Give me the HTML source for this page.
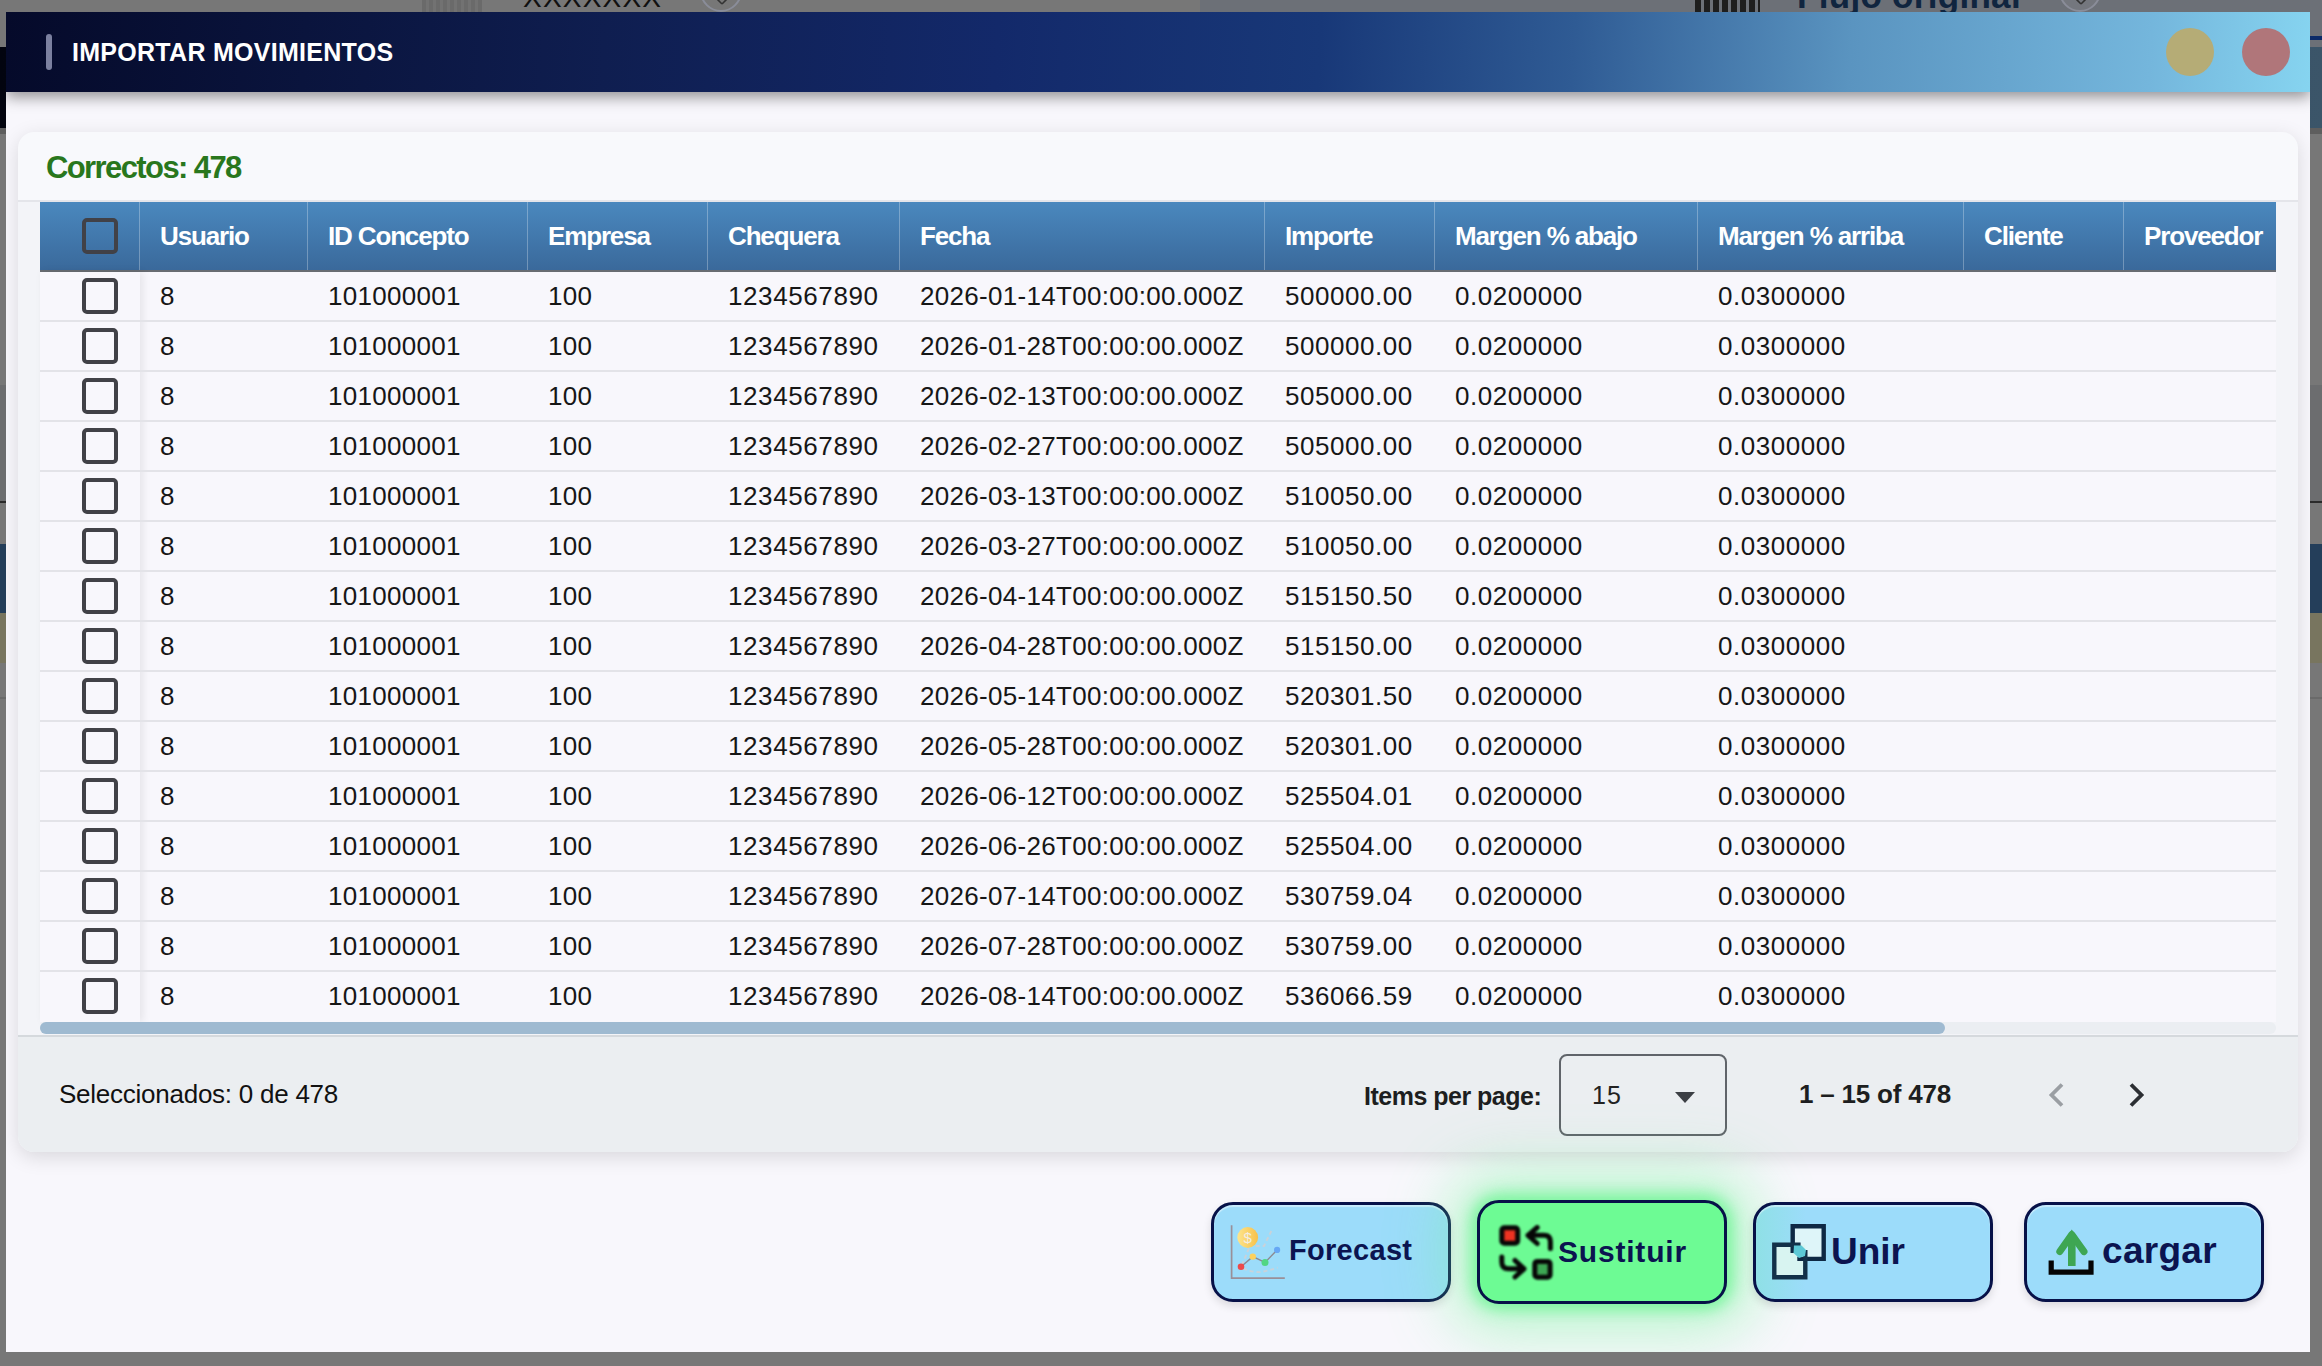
<!DOCTYPE html>
<html><head><meta charset="utf-8">
<style>
*{box-sizing:border-box;margin:0;padding:0}
html,body{width:2322px;height:1366px;overflow:hidden}
body{background:#777777;position:relative;font-family:"Liberation Sans",sans-serif}
#dlg{position:absolute;left:6px;top:12px;width:2304px;height:1340px;background:#f8f7fc;overflow:hidden}
#hdr{position:absolute;left:0;top:0;width:2304px;height:80px;
 background:linear-gradient(93deg,#050a2a 0%,#0f1e50 26%,#13296a 43%,#183878 57%,#2f5b94 68%,#5a94c0 80%,#74b6dc 93%,#86d4f0 100%);
 box-shadow:0 5px 14px rgba(0,0,0,.42);z-index:2}
#bar{position:absolute;left:40px;top:22px;width:6px;height:36px;border-radius:3px;background:#7b809f}
#title{position:absolute;left:66px;top:25px;color:#fff;font-weight:bold;font-size:25px;letter-spacing:0.28px;line-height:30px;white-space:nowrap}
.dot{position:absolute;top:16px;width:48px;height:48px;border-radius:50%}
#card{position:absolute;left:12px;top:120px;width:2280px;height:1020px;background:#f8f9fc;border-radius:16px;
 box-shadow:0 5px 20px rgba(0,0,0,.13);overflow:hidden}
#corr{position:absolute;left:28px;top:18px;color:#29771d;font-weight:bold;font-size:31px;letter-spacing:-1.6px;line-height:36px;white-space:nowrap}
#tarea{position:absolute;left:0;top:68px;width:2280px;height:835px;background:#f3f4f8;border-top:2px solid #e4e5ea}
#tbl{position:absolute;left:22px;top:0px;width:2236px;height:820px;background:#f8f7fc}
.th{position:absolute;left:0;top:0;width:2236px;height:70px;background:linear-gradient(#4a88be,#3a699b);border-bottom:2px solid #686c72}
.hc{position:absolute;top:0;height:68px;color:#fff;font-weight:bold;font-size:26px;letter-spacing:-1.15px;line-height:68px;padding-left:20px;white-space:nowrap}
.hc.sep{border-left:1px solid rgba(255,255,255,.28)}
.row{position:absolute;left:0;width:2236px;height:50px;border-bottom:2px solid #e3e3e8}
.c{position:absolute;top:0;height:48px;line-height:48px;font-size:26px;color:#161616;padding-left:21px;letter-spacing:0.3px;white-space:nowrap}
.c0{padding-left:0}
.cb{position:absolute;left:42px;top:6px;width:36px;height:36px;border:4px solid #414147;border-radius:5px}
.hcb{top:16px}
#sticky{position:absolute;left:0;top:70px;width:100px;height:750px;box-shadow:3px 0 8px rgba(0,0,0,.08);background:#f8f7fc}
#track{position:absolute;left:22px;top:820px;width:2236px;height:12px;border-radius:6px;background:#ebeef2}
#thumb{position:absolute;left:22px;top:820px;width:1905px;height:12px;border-radius:6px;background:#9fbad1}
#pag{position:absolute;left:0;top:903px;width:2280px;height:117px;background:#ebeef1;border-top:2px solid #d5d9dd}
#sel{position:absolute;left:41px;top:42px;font-size:26px;color:#111;line-height:30px;letter-spacing:-0.25px;white-space:nowrap}
#ipp{position:absolute;left:1346px;top:44px;font-size:25px;font-weight:bold;color:#1d1e20;line-height:30px;letter-spacing:-0.5px;white-space:nowrap}
#selbox{position:absolute;left:1541px;top:17px;width:168px;height:82px;border:2px solid #60646a;border-radius:8px}
#selv{position:absolute;left:31px;top:24px;font-size:25px;color:#222;line-height:30px;letter-spacing:1px}
#caret{position:absolute;left:114px;top:36px;width:0;height:0;border-left:10px solid transparent;border-right:10px solid transparent;border-top:11px solid #3c3f45}
#range{position:absolute;left:1781px;top:42px;font-size:26px;font-weight:bold;color:#1d1e20;line-height:30px;letter-spacing:-0.2px;white-space:nowrap}
#prev{position:absolute;left:2028px;top:45px}
#next{position:absolute;left:2109px;top:45px}
.btn{position:absolute;top:1190px;height:100px;border:3.5px solid #071148;border-radius:22px;background:#9cdcfa;box-shadow:inset 0 2px 1px rgba(255,255,255,.45),0 4px 8px rgba(0,0,0,.12)}
.btxt{position:absolute;color:#0b1450;font-weight:bold;font-size:29px;line-height:36px;white-space:nowrap}
.ico{position:absolute}
.bgb{position:absolute;white-space:nowrap}
.row.last{border-bottom:none}

</style></head><body>
<div class="bgb" style="left:1200px;top:0;width:1122px;height:47px;background:#6c7077"></div>
<div class="bgb" style="left:0;top:47px;width:2322px;height:81px;background:linear-gradient(90deg,#02040f,#3b5569)"></div>
<div class="bgb" style="left:2300px;top:36px;width:22px;height:4px;background:#0b2a68"></div>
<div class="bgb" style="left:0;top:128px;width:2322px;height:6px;background:#5e5e5e"></div>
<div class="bgb" style="left:0;top:385px;width:2322px;height:117px;background:#6c6d6f"></div>
<div class="bgb" style="left:0;top:501px;width:2322px;height:2px;background:#2a2a2a"></div>
<div class="bgb" style="left:0;top:544px;width:2322px;height:69px;background:#243e5a"></div>
<div class="bgb" style="left:0;top:613px;width:2322px;height:50px;background:#78755f"></div>
<div class="bgb" style="left:0;top:697px;width:2322px;height:2px;background:#6a6a6a"></div>
<div class="bgb" style="left:422px;top:0;width:60px;height:12px;background:repeating-linear-gradient(90deg,#6a6a6a 0 4px,#727272 4px 7px)"></div>
<div class="bgb" style="left:1695px;top:0;width:65px;height:12px;background:repeating-linear-gradient(90deg,#1e1e1e 0 6px,#6c7077 6px 9px)"></div>
<div class="bgb" style="left:523px;top:-17px;font-size:28px;color:#111;letter-spacing:1.2px;line-height:30px">XXXXXXX</div>
<div class="bgb" style="left:1797px;top:-21px;font-size:35px;font-weight:bold;color:#10253f;line-height:34px;letter-spacing:0.3px">Flujo original</div>
<div class="bgb" style="left:700px;top:-30px;width:42px;height:42px;border-radius:50%;border:2px solid #8a8d99"></div><svg class="bgb" style="left:712px;top:0" width="18" height="8"><path d="M2 -4 L10 4 M18 -4 L10 4" stroke="#333" stroke-width="1.6"/></svg>
<div class="bgb" style="left:2059px;top:-30px;width:42px;height:42px;border-radius:50%;border:2px solid #8a8d99;background:#74777e"></div><svg class="bgb" style="left:2071px;top:0" width="18" height="8"><path d="M2 -4 L10 4 M18 -4 L10 4" stroke="#333" stroke-width="1.6"/></svg>
<div id="dlg">
 <div id="hdr">
  <div id="bar"></div>
  <div id="title">IMPORTAR MOVIMIENTOS</div>
  <div class="dot" style="left:2160px;background:#b5ac76"></div>
  <div class="dot" style="left:2236px;background:#b0767a"></div>
 </div>
 <div id="card">
  <div id="corr">Correctos: 478</div>
  <div id="tarea">
   <div id="tbl">
    <div class="th"><div class="hc" style="left:0px;width:99px"><span class="cb hcb"></span></div><div class="hc sep" style="left:99px;width:168px">Usuario</div><div class="hc sep" style="left:267px;width:220px">ID Concepto</div><div class="hc sep" style="left:487px;width:180px">Empresa</div><div class="hc sep" style="left:667px;width:192px">Chequera</div><div class="hc sep" style="left:859px;width:365px">Fecha</div><div class="hc sep" style="left:1224px;width:170px">Importe</div><div class="hc sep" style="left:1394px;width:263px">Margen % abajo</div><div class="hc sep" style="left:1657px;width:266px">Margen % arriba</div><div class="hc sep" style="left:1923px;width:160px">Cliente</div><div class="hc sep" style="left:2083px;width:153px">Proveedor</div></div>
    <div id="sticky"></div>
    <div class="row" style="top:70px"><div class="c c0" style="left:0px;width:99px"><span class="cb"></span></div><div class="c" style="left:99px;width:168px">8</div><div class="c" style="left:267px;width:220px">101000001</div><div class="c" style="left:487px;width:180px">100</div><div class="c" style="left:667px;width:192px;letter-spacing:0.6px">1234567890</div><div class="c" style="left:859px;width:365px">2026-01-14T00:00:00.000Z</div><div class="c" style="left:1224px;width:170px;letter-spacing:0.55px">500000.00</div><div class="c" style="left:1394px;width:263px;letter-spacing:0.55px">0.0200000</div><div class="c" style="left:1657px;width:266px;letter-spacing:0.55px">0.0300000</div></div>
<div class="row" style="top:120px"><div class="c c0" style="left:0px;width:99px"><span class="cb"></span></div><div class="c" style="left:99px;width:168px">8</div><div class="c" style="left:267px;width:220px">101000001</div><div class="c" style="left:487px;width:180px">100</div><div class="c" style="left:667px;width:192px;letter-spacing:0.6px">1234567890</div><div class="c" style="left:859px;width:365px">2026-01-28T00:00:00.000Z</div><div class="c" style="left:1224px;width:170px;letter-spacing:0.55px">500000.00</div><div class="c" style="left:1394px;width:263px;letter-spacing:0.55px">0.0200000</div><div class="c" style="left:1657px;width:266px;letter-spacing:0.55px">0.0300000</div></div>
<div class="row" style="top:170px"><div class="c c0" style="left:0px;width:99px"><span class="cb"></span></div><div class="c" style="left:99px;width:168px">8</div><div class="c" style="left:267px;width:220px">101000001</div><div class="c" style="left:487px;width:180px">100</div><div class="c" style="left:667px;width:192px;letter-spacing:0.6px">1234567890</div><div class="c" style="left:859px;width:365px">2026-02-13T00:00:00.000Z</div><div class="c" style="left:1224px;width:170px;letter-spacing:0.55px">505000.00</div><div class="c" style="left:1394px;width:263px;letter-spacing:0.55px">0.0200000</div><div class="c" style="left:1657px;width:266px;letter-spacing:0.55px">0.0300000</div></div>
<div class="row" style="top:220px"><div class="c c0" style="left:0px;width:99px"><span class="cb"></span></div><div class="c" style="left:99px;width:168px">8</div><div class="c" style="left:267px;width:220px">101000001</div><div class="c" style="left:487px;width:180px">100</div><div class="c" style="left:667px;width:192px;letter-spacing:0.6px">1234567890</div><div class="c" style="left:859px;width:365px">2026-02-27T00:00:00.000Z</div><div class="c" style="left:1224px;width:170px;letter-spacing:0.55px">505000.00</div><div class="c" style="left:1394px;width:263px;letter-spacing:0.55px">0.0200000</div><div class="c" style="left:1657px;width:266px;letter-spacing:0.55px">0.0300000</div></div>
<div class="row" style="top:270px"><div class="c c0" style="left:0px;width:99px"><span class="cb"></span></div><div class="c" style="left:99px;width:168px">8</div><div class="c" style="left:267px;width:220px">101000001</div><div class="c" style="left:487px;width:180px">100</div><div class="c" style="left:667px;width:192px;letter-spacing:0.6px">1234567890</div><div class="c" style="left:859px;width:365px">2026-03-13T00:00:00.000Z</div><div class="c" style="left:1224px;width:170px;letter-spacing:0.55px">510050.00</div><div class="c" style="left:1394px;width:263px;letter-spacing:0.55px">0.0200000</div><div class="c" style="left:1657px;width:266px;letter-spacing:0.55px">0.0300000</div></div>
<div class="row" style="top:320px"><div class="c c0" style="left:0px;width:99px"><span class="cb"></span></div><div class="c" style="left:99px;width:168px">8</div><div class="c" style="left:267px;width:220px">101000001</div><div class="c" style="left:487px;width:180px">100</div><div class="c" style="left:667px;width:192px;letter-spacing:0.6px">1234567890</div><div class="c" style="left:859px;width:365px">2026-03-27T00:00:00.000Z</div><div class="c" style="left:1224px;width:170px;letter-spacing:0.55px">510050.00</div><div class="c" style="left:1394px;width:263px;letter-spacing:0.55px">0.0200000</div><div class="c" style="left:1657px;width:266px;letter-spacing:0.55px">0.0300000</div></div>
<div class="row" style="top:370px"><div class="c c0" style="left:0px;width:99px"><span class="cb"></span></div><div class="c" style="left:99px;width:168px">8</div><div class="c" style="left:267px;width:220px">101000001</div><div class="c" style="left:487px;width:180px">100</div><div class="c" style="left:667px;width:192px;letter-spacing:0.6px">1234567890</div><div class="c" style="left:859px;width:365px">2026-04-14T00:00:00.000Z</div><div class="c" style="left:1224px;width:170px;letter-spacing:0.55px">515150.50</div><div class="c" style="left:1394px;width:263px;letter-spacing:0.55px">0.0200000</div><div class="c" style="left:1657px;width:266px;letter-spacing:0.55px">0.0300000</div></div>
<div class="row" style="top:420px"><div class="c c0" style="left:0px;width:99px"><span class="cb"></span></div><div class="c" style="left:99px;width:168px">8</div><div class="c" style="left:267px;width:220px">101000001</div><div class="c" style="left:487px;width:180px">100</div><div class="c" style="left:667px;width:192px;letter-spacing:0.6px">1234567890</div><div class="c" style="left:859px;width:365px">2026-04-28T00:00:00.000Z</div><div class="c" style="left:1224px;width:170px;letter-spacing:0.55px">515150.00</div><div class="c" style="left:1394px;width:263px;letter-spacing:0.55px">0.0200000</div><div class="c" style="left:1657px;width:266px;letter-spacing:0.55px">0.0300000</div></div>
<div class="row" style="top:470px"><div class="c c0" style="left:0px;width:99px"><span class="cb"></span></div><div class="c" style="left:99px;width:168px">8</div><div class="c" style="left:267px;width:220px">101000001</div><div class="c" style="left:487px;width:180px">100</div><div class="c" style="left:667px;width:192px;letter-spacing:0.6px">1234567890</div><div class="c" style="left:859px;width:365px">2026-05-14T00:00:00.000Z</div><div class="c" style="left:1224px;width:170px;letter-spacing:0.55px">520301.50</div><div class="c" style="left:1394px;width:263px;letter-spacing:0.55px">0.0200000</div><div class="c" style="left:1657px;width:266px;letter-spacing:0.55px">0.0300000</div></div>
<div class="row" style="top:520px"><div class="c c0" style="left:0px;width:99px"><span class="cb"></span></div><div class="c" style="left:99px;width:168px">8</div><div class="c" style="left:267px;width:220px">101000001</div><div class="c" style="left:487px;width:180px">100</div><div class="c" style="left:667px;width:192px;letter-spacing:0.6px">1234567890</div><div class="c" style="left:859px;width:365px">2026-05-28T00:00:00.000Z</div><div class="c" style="left:1224px;width:170px;letter-spacing:0.55px">520301.00</div><div class="c" style="left:1394px;width:263px;letter-spacing:0.55px">0.0200000</div><div class="c" style="left:1657px;width:266px;letter-spacing:0.55px">0.0300000</div></div>
<div class="row" style="top:570px"><div class="c c0" style="left:0px;width:99px"><span class="cb"></span></div><div class="c" style="left:99px;width:168px">8</div><div class="c" style="left:267px;width:220px">101000001</div><div class="c" style="left:487px;width:180px">100</div><div class="c" style="left:667px;width:192px;letter-spacing:0.6px">1234567890</div><div class="c" style="left:859px;width:365px">2026-06-12T00:00:00.000Z</div><div class="c" style="left:1224px;width:170px;letter-spacing:0.55px">525504.01</div><div class="c" style="left:1394px;width:263px;letter-spacing:0.55px">0.0200000</div><div class="c" style="left:1657px;width:266px;letter-spacing:0.55px">0.0300000</div></div>
<div class="row" style="top:620px"><div class="c c0" style="left:0px;width:99px"><span class="cb"></span></div><div class="c" style="left:99px;width:168px">8</div><div class="c" style="left:267px;width:220px">101000001</div><div class="c" style="left:487px;width:180px">100</div><div class="c" style="left:667px;width:192px;letter-spacing:0.6px">1234567890</div><div class="c" style="left:859px;width:365px">2026-06-26T00:00:00.000Z</div><div class="c" style="left:1224px;width:170px;letter-spacing:0.55px">525504.00</div><div class="c" style="left:1394px;width:263px;letter-spacing:0.55px">0.0200000</div><div class="c" style="left:1657px;width:266px;letter-spacing:0.55px">0.0300000</div></div>
<div class="row" style="top:670px"><div class="c c0" style="left:0px;width:99px"><span class="cb"></span></div><div class="c" style="left:99px;width:168px">8</div><div class="c" style="left:267px;width:220px">101000001</div><div class="c" style="left:487px;width:180px">100</div><div class="c" style="left:667px;width:192px;letter-spacing:0.6px">1234567890</div><div class="c" style="left:859px;width:365px">2026-07-14T00:00:00.000Z</div><div class="c" style="left:1224px;width:170px;letter-spacing:0.55px">530759.04</div><div class="c" style="left:1394px;width:263px;letter-spacing:0.55px">0.0200000</div><div class="c" style="left:1657px;width:266px;letter-spacing:0.55px">0.0300000</div></div>
<div class="row" style="top:720px"><div class="c c0" style="left:0px;width:99px"><span class="cb"></span></div><div class="c" style="left:99px;width:168px">8</div><div class="c" style="left:267px;width:220px">101000001</div><div class="c" style="left:487px;width:180px">100</div><div class="c" style="left:667px;width:192px;letter-spacing:0.6px">1234567890</div><div class="c" style="left:859px;width:365px">2026-07-28T00:00:00.000Z</div><div class="c" style="left:1224px;width:170px;letter-spacing:0.55px">530759.00</div><div class="c" style="left:1394px;width:263px;letter-spacing:0.55px">0.0200000</div><div class="c" style="left:1657px;width:266px;letter-spacing:0.55px">0.0300000</div></div>
<div class="row last" style="top:770px"><div class="c c0" style="left:0px;width:99px"><span class="cb"></span></div><div class="c" style="left:99px;width:168px">8</div><div class="c" style="left:267px;width:220px">101000001</div><div class="c" style="left:487px;width:180px">100</div><div class="c" style="left:667px;width:192px;letter-spacing:0.6px">1234567890</div><div class="c" style="left:859px;width:365px">2026-08-14T00:00:00.000Z</div><div class="c" style="left:1224px;width:170px;letter-spacing:0.55px">536066.59</div><div class="c" style="left:1394px;width:263px;letter-spacing:0.55px">0.0200000</div><div class="c" style="left:1657px;width:266px;letter-spacing:0.55px">0.0300000</div></div>

   </div>
   <div id="track"></div><div id="thumb"></div>
  </div>
  <div id="pag">
   <div id="sel">Seleccionados: 0 de 478</div>
   <div id="ipp">Items per page:</div>
   <div id="selbox"><div id="selv">15</div><div id="caret"></div></div>
   <div id="range">1 – 15 of 478</div>
   <svg id="prev" width="20" height="26" viewBox="0 0 20 26"><path d="M16 2.5 L5.5 13 L16 23.5" fill="none" stroke="#9a9ea3" stroke-width="3.8"/></svg>
   <svg id="next" width="20" height="26" viewBox="0 0 20 26"><path d="M4 2.5 L14.5 13 L4 23.5" fill="none" stroke="#2b2e33" stroke-width="3.8"/></svg>
  </div>
 </div>
 <div class="btn" style="left:1205px;width:240px;top:1190px;height:100px"></div>
 <div class="btn" style="left:1471px;width:250px;top:1188px;height:104px;background:#6dfb94;box-shadow:0 0 16px 6px rgba(100,245,140,.8),0 0 60px 30px rgba(110,245,150,.42)"></div>
 <div class="btn" style="left:1747px;width:240px;top:1190px;height:100px;background:linear-gradient(90deg,#8fe0e6 0px,#9cdcfa 50px)"></div>
 <div class="btn" style="left:2018px;width:240px;top:1190px;height:100px"></div>
 <!-- Forecast icon: origin page (1226,1220) -> dlg (1220,1208) -->
 <svg class="ico" style="left:1220px;top:1208px" width="64" height="64" viewBox="0 0 64 64">
  <defs>
   <linearGradient id="gcoin" x1="0" y1="0" x2="1" y2="0"><stop offset="0" stop-color="#fde58c"/><stop offset="1" stop-color="#f7c04a"/></linearGradient>
  </defs>
  <path d="M16 45 L23 28" fill="none" stroke="#c9d2da" stroke-width="1.9" stroke-dasharray="4 3"/>
  <path d="M29.7 26 L38 26 L45.6 10.4" fill="none" stroke="#c9d2da" stroke-width="1.9" stroke-dasharray="4 3"/>
  <path d="M17 48.5 Q25 52 33.3 52.1 Q42 51 51.7 47.7" fill="none" stroke="#c9d2da" stroke-width="1.9" stroke-dasharray="4 3"/>
  <path d="M5.6 5.2 V58.2 H58.8" fill="none" stroke="#9a8f98" stroke-width="1.7"/>
  <path d="M15 46.8 L26.8 36.6 L39 42.5 L51.1 29.9" fill="none" stroke="#8c8a92" stroke-width="1.4"/>
  <circle cx="21.7" cy="17.5" r="10.4" fill="url(#gcoin)"/>
  <text x="21.7" y="23" text-anchor="middle" font-family="Liberation Sans" font-size="15" fill="#f1ede4">$</text>
  <circle cx="15" cy="46.8" r="3.3" fill="#ec4a4a"/>
  <circle cx="26.8" cy="36.6" r="3.2" fill="#fcd15e"/>
  <circle cx="39" cy="42.5" r="3.5" fill="#52d684"/>
  <circle cx="51.1" cy="29.9" r="3.1" fill="#66a8f5"/>
 </svg>
 <!-- Sustituir icon: origin page (1496,1220) -> dlg (1490,1208) -->
 <svg class="ico" style="left:1490px;top:1208px;filter:blur(0.8px)" width="64" height="64" viewBox="0 0 64 64">
  <rect x="5.8" y="7.7" width="15.9" height="15.6" rx="2.5" fill="#ee3322" stroke="#060606" stroke-width="5"/>
  <rect x="38.8" y="41.4" width="15.3" height="15.9" rx="2.5" fill="#3da653" stroke="#060606" stroke-width="5"/>
  <path d="M41.2 7.5 L32 15.3 L41.2 23.5 M32 15.3 H48 Q54.4 15.3 54.4 22 V28.5" fill="none" stroke="#060606" stroke-width="5" stroke-linecap="round" stroke-linejoin="round"/>
  <path d="M5.8 37 V42 Q5.8 48.8 12.7 48.8 H28 M19 40.5 L28 48.8 L19 57" fill="none" stroke="#060606" stroke-width="5" stroke-linecap="round" stroke-linejoin="round"/>
 </svg>
 <!-- Unir icon: origin page (1766,1220) -> dlg (1760,1208) -->
 <svg class="ico" style="left:1760px;top:1208px;filter:blur(0.4px)" width="64" height="64" viewBox="0 0 64 64">
  <rect x="26.7" y="6.2" width="31" height="32.7" fill="#def5f9"/>
  <rect x="8.3" y="24.7" width="31" height="32.6" fill="#d8f4f1"/>
  <path d="M26.7 32.9 V6.2 H57.7 V38.9 H31.3" fill="none" stroke="#0e2844" stroke-width="4.4"/>
  <path d="M34.6 24.7 H8.3 V57.3 H39.3 V30" fill="none" stroke="#123049" stroke-width="4.4"/>
  <path d="M28 25.5 L35.5 25.5 L40 30 L39 36 L33 38 L27.5 33 Z" fill="#5cc8d6"/>
 </svg>
 <!-- cargar icon: origin page (2042,1220) -> dlg (2036,1208) -->
 <svg class="ico" style="left:2036px;top:1208px;filter:blur(0.3px)" width="64" height="64" viewBox="0 0 64 64">
  <path d="M9.2 40.6 V52.2 H49 V40.6" fill="none" stroke="#050505" stroke-width="5.2"/>
  <path d="M29.8 46 V16" fill="none" stroke="#3ea653" stroke-width="7.6"/>
  <path d="M17.8 31.6 L29.8 14.5 L42 31.6" fill="none" stroke="#3ea653" stroke-width="7" stroke-linecap="round" stroke-linejoin="round"/>
  <path d="M24 18 L29.8 9.5 L35.6 18 Z" fill="#3ea653"/>
 </svg>
 <div class="btxt" style="left:1283px;top:1220px;font-size:29px;letter-spacing:0.3px">Forecast</div>
 <div class="btxt" style="left:1552px;top:1222px;font-size:30px;letter-spacing:0.8px">Sustituir</div>
 <div class="btxt" style="left:1825px;top:1222px;font-size:37px;letter-spacing:0px">Unir</div>
 <div class="btxt" style="left:2096px;top:1221px;font-size:37px;letter-spacing:0.3px">cargar</div>
</div>
</body></html>
